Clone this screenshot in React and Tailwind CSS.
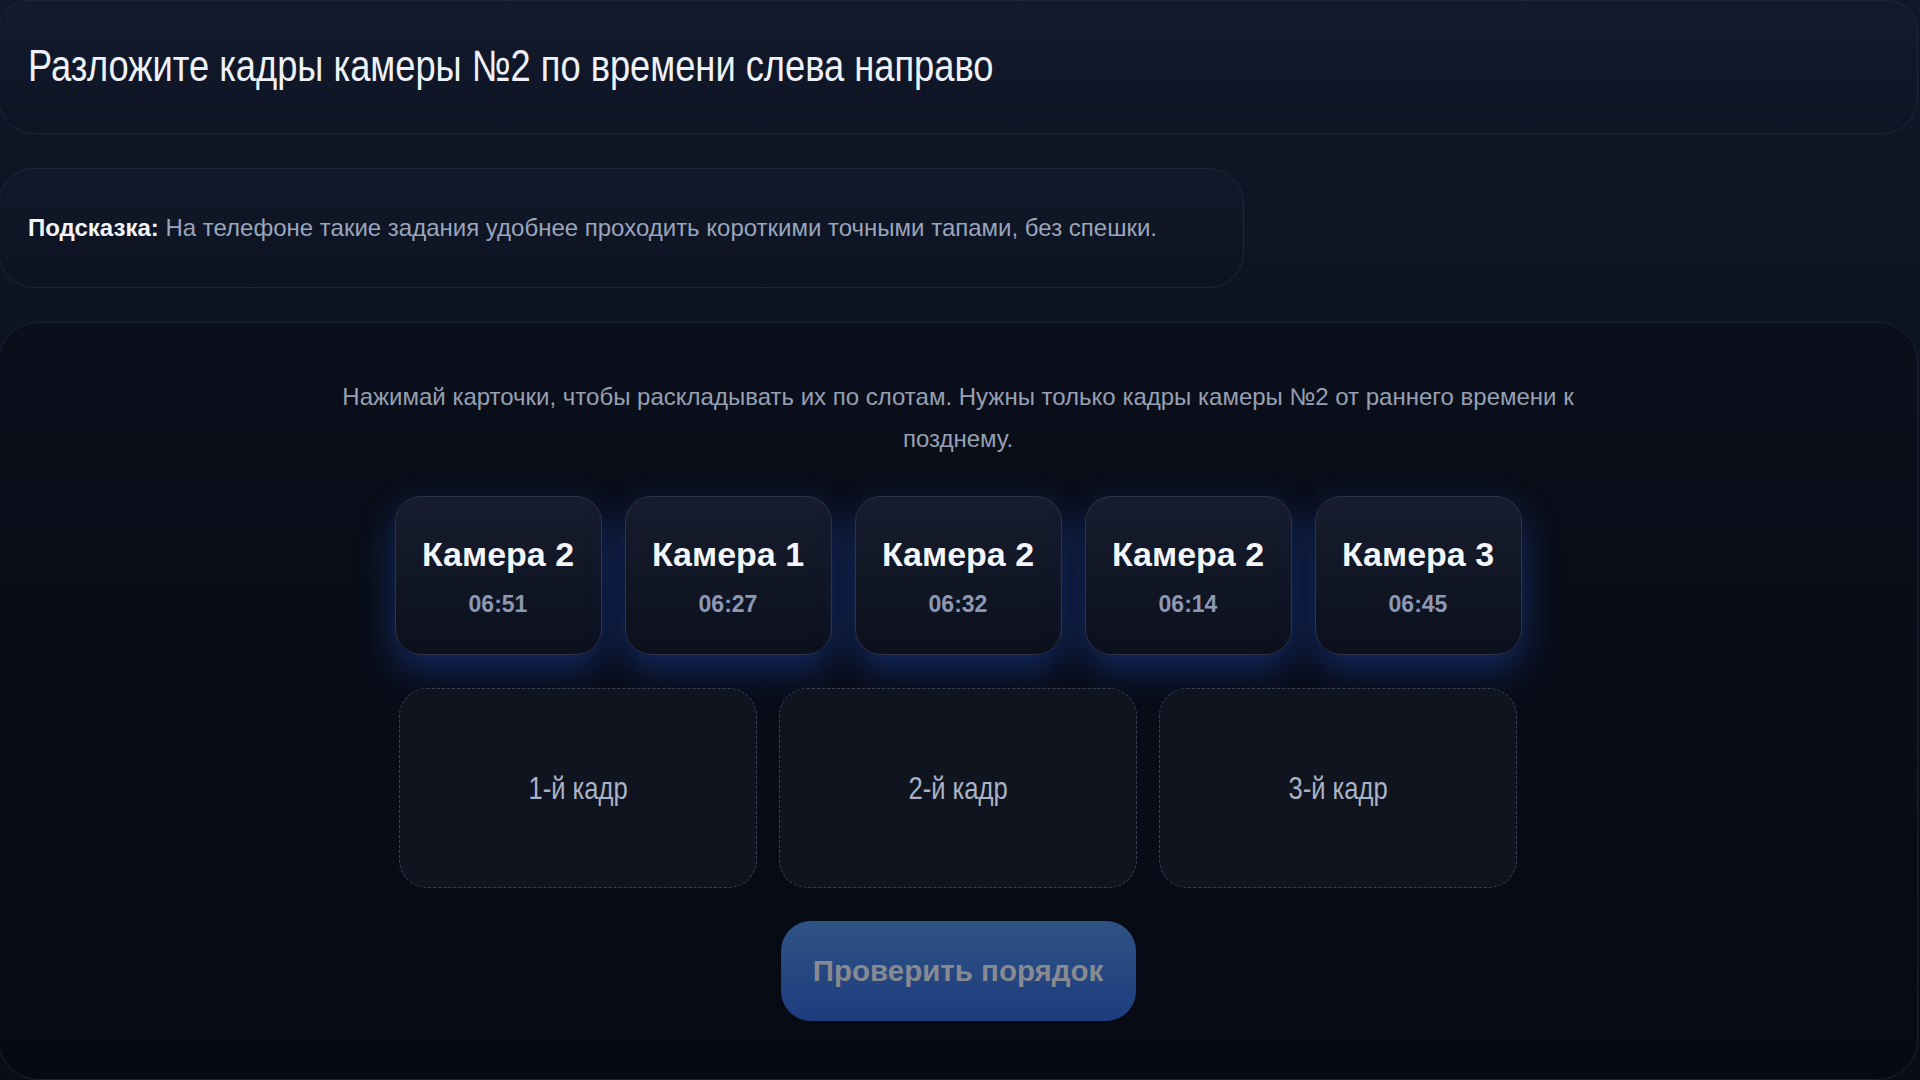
import React from "react";

const CARDS = [
  { cam: "Камера 2", time: "06:51" },
  { cam: "Камера 1", time: "06:27" },
  { cam: "Камера 2", time: "06:32" },
  { cam: "Камера 2", time: "06:14" },
  { cam: "Камера 3", time: "06:45" },
];

const SLOTS = ["1-й кадр", "2-й кадр", "3-й кадр"];

const sans = "font-['Liberation_Sans',Arial,sans-serif]";
const bold = "font-['Liberation_Sans',Arial,sans-serif] font-bold";

const App = () => {
  return (
    <div className={`${sans} min-h-screen w-full overflow-hidden bg-[linear-gradient(180deg,#111728_0%,#0d1220_45%,#0a0d18_100%)]`}>
      <div className="-ml-[2px] mr-[2px] flex flex-col gap-[34px]">
        {/* Title */}
        <div className="h-[134px] flex items-center rounded-b-[36px] rounded-t-[30px] border border-[#1f2638] bg-[linear-gradient(180deg,#121a2c,#0e1424)] pl-[29px]">
          <h1 className="inline-block origin-left scale-x-[0.824] text-[44px] leading-none text-[#eef2f8] -mt-[2px] whitespace-nowrap">
            Разложите кадры камеры №2 по времени слева направо
          </h1>
        </div>

        {/* Hint */}
        <div className="w-[1246px] h-[120px] flex items-center rounded-[36px] border border-[#1f2638] bg-[linear-gradient(180deg,#111829,#0d1322)] pl-[29px]">
          <p className="text-[24px] leading-none text-[#9aa5bc]">
            <span className={`${bold} text-[24px] text-[#f2f5fa]`}>Подсказка:</span>{" "}
            На телефоне такие задания удобнее проходить короткими точными тапами, без спешки.
          </p>
        </div>

        {/* Main task */}
        <div className="h-[758px] rounded-[40px] border border-[#1b2131] bg-[linear-gradient(180deg,#0b0f1b,#070a13)] flex flex-col items-center pt-[53px]">
          <p className="max-w-[1290px] text-center text-[24px] leading-[42px] text-[#97a0b3]">
            Нажимай карточки, чтобы раскладывать их по слотам. Нужны только кадры камеры №2 от раннего времени к позднему.
          </p>

          <div className="mt-[36px] flex gap-[23px]">
            {CARDS.map((c, i) => (
              <div
                key={i}
                className="w-[207px] h-[159px] rounded-[26px] border border-[#2b3449] bg-[linear-gradient(180deg,#171d2e,#0c101d)] shadow-[0_14px_36px_rgba(29,78,190,0.45)] flex flex-col items-center pt-[40px]"
              >
                <div className={`${bold} text-[34px] leading-none text-[#f4f6fb]`}>{c.cam}</div>
                <div className={`${bold} text-[23px] leading-none text-[#8d98b3] mt-[22px]`}>{c.time}</div>
              </div>
            ))}
          </div>

          <div className="mt-[33px] flex gap-[22px]">
            {SLOTS.map((s) => (
              <div
                key={s}
                className="w-[358px] h-[200px] rounded-[28px] border-[1.5px] border-dashed border-[#384157] bg-[#10141f] flex items-center justify-center"
              >
                <span className="inline-block scale-x-[0.8] text-[32px] leading-none text-[#a9b2c6] whitespace-nowrap">{s}</span>
              </div>
            ))}
          </div>

          <button
            disabled
            className="mt-[33px] w-[355px] h-[100px] rounded-[30px] bg-[linear-gradient(180deg,#2f5384,#1d3c7e)] flex items-center justify-center"
          >
            <span className={`${bold} text-[29.5px] leading-none text-[#878a90]`}>Проверить порядок</span>
          </button>
        </div>
      </div>
    </div>
  );
};

export default App;
